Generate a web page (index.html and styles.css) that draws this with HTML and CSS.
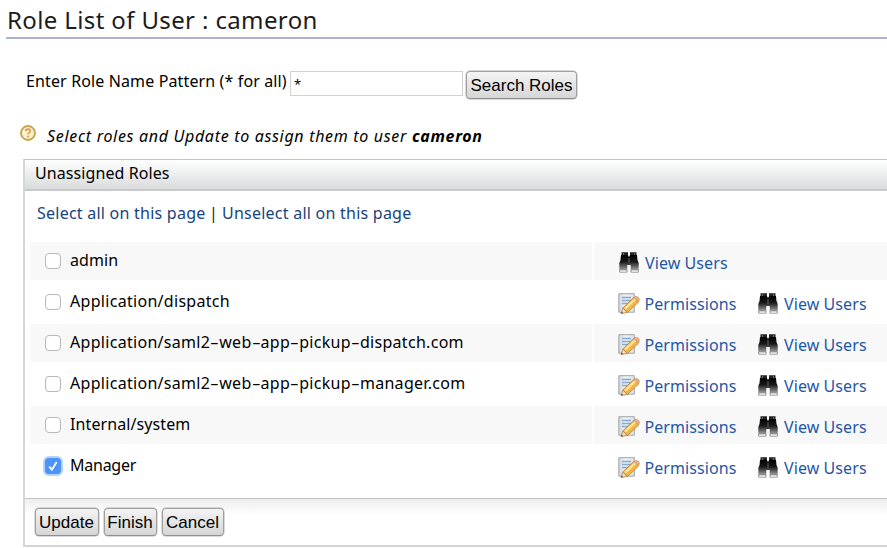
FILE: index.html
```html
<!DOCTYPE html>
<html lang="en">
<head>
<meta charset="utf-8">
<title>Role List of User</title>
<link rel="stylesheet" href="styles.css">
</head>
<body>
<svg class="defs" width="0" height="0" aria-hidden="true">
  <defs>
    <linearGradient id="barrel" x1="0" y1="0" x2="0" y2="1">
      <stop offset="0" stop-color="#000"/><stop offset=".4" stop-color="#1a1a1a"/><stop offset="1" stop-color="#c4c4c4"/>
    </linearGradient>
    <linearGradient id="sheet" x1="0" y1="0" x2="1" y2="0">
      <stop offset="0" stop-color="#cfd5da"/><stop offset=".4" stop-color="#eef3f8"/><stop offset="1" stop-color="#dde4ea"/>
    </linearGradient>
    <symbol id="binoculars" viewBox="0 0 20 21">
      <path fill="#222" d="M2.500 .3H9v3H2.500zM11 .3h6.500v3H11z"/>
      <path fill="url(#barrel)" d="M2 3h7l.5 1.500h1L11 3h7l.5 5 1.200 3v9.300h-8V13H8.300v7.300h-8V11L1.500 8z"/>
      <path fill="#fff" stroke="#8a8a8a" stroke-width=".8" d="M.7 18h7.200v2.200H.7zM12.100 18h7.200v2.200h-7.200z"/>
      <path fill="#999" opacity=".6" d="M4 1h1v2H4zM15 1h1v2h-1zM9.500 6h1v5h-1z"/>
    </symbol>
    <symbol id="edit" viewBox="0 0 22 21">
      <path fill="url(#sheet)" stroke="#a3a5a7" d="M.8.700h15.500v18.500H.8z"/>
      <path fill="none" stroke="#83a9d2" stroke-width="1.300" d="M4 4.500h9M4 7.500h9M4 10.500h7"/>
      <path fill="#f2b544" stroke="#bd8230" stroke-width=".8" d="M4.800 15 16 4.200l4.800 4.600L9.500 19.500z"/>
      <path fill="none" stroke="#ffe59c" stroke-width="2.200" d="M7 15.800 17.700 5.700"/>
      <path fill="#f3dcb8" stroke="#a37544" stroke-width=".7" d="m4.800 15 4.700 4.500-6.300 1z"/>
      <path fill="#665040" d="m3.600 18.500 1.500 1.600-2.200.6z"/>
      <path fill="#eeb08c" stroke="#c09068" stroke-width=".7" d="m15.700 4.600 1-1q2-.6 3.600.7 1.500 1.500.9 3.300l-.8.900z"/>
    </symbol>
  </defs>
</svg>
<main class="page">
  <h1 class="title">Role List of User : cameron</h1>
  <form class="search">
    <label class="t-label" for="pattern">Enter Role Name Pattern (* for all)</label>
    <input class="pattern" id="pattern" type="text" value="*">
    <button class="btn search-btn" type="button">Search Roles</button>
  </form>
  <p class="hint">
    <svg class="help" viewBox="0 0 16 16"><circle cx="8" cy="8" r="7" fill="#fdf3d3" stroke="#c9a44f" stroke-width="1.900"/><path d="M5.700 6.200Q5.800 4.100 8 4.100t2.300 1.900Q10.300 7.200 9 7.900 8 8.400 8 9.500" fill="none" stroke="#dc963f" stroke-width="1.600"/><path fill="#dc963f" d="M7.100 10.700h1.800v1.700H7.100z"/></svg>
    <span class="t-hint">Select roles and Update to assign them to user <b>cameron</b></span>
  </p>
  <section class="panel">
    <h2 class="panel-head">Unassigned Roles</h2>
    <div class="panel-body">
      <div class="select-links"><a class="t-sel">Select all on this page</a><span class="bar">|</span><a class="t-unsel">Unselect all on this page</a></div>
      <div class="row shade">
        <div class="name"><i class="box"></i><span class="tight">admin</span></div>
        <div class="actions"><a class="action view"><svg class="bin"><use href="#binoculars"/></svg>View Users</a></div>
      </div>
      <div class="row">
        <div class="name"><i class="box"></i><span>Application/dispatch</span></div>
        <div class="actions"><a class="action perm"><svg class="pen"><use href="#edit"/></svg>Permissions</a><a class="action view"><svg class="bin"><use href="#binoculars"/></svg>View Users</a></div>
      </div>
      <div class="row shade">
        <div class="name"><i class="box"></i><span>Application/saml2<i class="dash">-</i>web<i class="dash">-</i>app<i class="dash">-</i>pickup<i class="dash">-</i>dispatch.com</span></div>
        <div class="actions"><a class="action perm"><svg class="pen"><use href="#edit"/></svg>Permissions</a><a class="action view"><svg class="bin"><use href="#binoculars"/></svg>View Users</a></div>
      </div>
      <div class="row">
        <div class="name"><i class="box"></i><span>Application/saml2<i class="dash">-</i>web<i class="dash">-</i>app<i class="dash">-</i>pickup<i class="dash">-</i>manager.com</span></div>
        <div class="actions"><a class="action perm"><svg class="pen"><use href="#edit"/></svg>Permissions</a><a class="action view"><svg class="bin"><use href="#binoculars"/></svg>View Users</a></div>
      </div>
      <div class="row shade">
        <div class="name"><i class="box"></i><span class="tight">Internal/system</span></div>
        <div class="actions"><a class="action perm"><svg class="pen"><use href="#edit"/></svg>Permissions</a><a class="action view"><svg class="bin"><use href="#binoculars"/></svg>View Users</a></div>
      </div>
      <div class="row">
        <div class="name"><i class="box checked"><svg viewBox="0 0 16 16"><path d="m4.200 8.500 2.700 3.200L11.700 4" fill="none" stroke="#fff" stroke-width="1.800"/></svg></i><span class="tighter">Manager</span></div>
        <div class="actions"><a class="action perm"><svg class="pen"><use href="#edit"/></svg>Permissions</a><a class="action view"><svg class="bin"><use href="#binoculars"/></svg>View Users</a></div>
      </div>
    </div>
    <footer class="panel-foot">
      <button class="btn update" type="button">Update</button>
      <button class="btn finish" type="button">Finish</button>
      <button class="btn cancel" type="button">Cancel</button>
    </footer>
  </section>
</main>
</body>
</html>
```
FILE: styles.css
```css
* { box-sizing: border-box; }
body {
  margin: 0;
  background: #fff;
  color: #000;
  font: 16px/20px "Noto Sans", "Open Sans", sans-serif;
  letter-spacing: .3px;
  overflow: hidden;
  white-space: nowrap;
}
.defs { display: block; }
.page { height: 548px; padding-left: 6px; }
.title {
  margin: 0;
  height: 39px;
  padding: 4px 0 0 1px;
  border-bottom: 2px solid #a9b3d1;
  color: #1c1c1c;
  font-size: 24px;
  font-weight: 400;
  line-height: 32px;
  letter-spacing: .37px;
}
.search {
  display: flex;
  align-items: flex-start;
  height: 83px;
  padding: 32px 0 0 20px;
}
.search label { width: 264px; letter-spacing: .13px; }
.pattern {
  width: 173px;
  height: 25px;
  padding: 0 3px;
  border: 1px solid #d2d2d2;
  font: 13px "Noto Sans", sans-serif;
}
.btn {
  height: 28px;
  padding: 1px 0 0;
  border: 1.500px solid #a0a0a0;
  border-bottom-color: #8e8e8e;
  border-radius: 4px;
  background: linear-gradient(#f4f4f4, #d6d6d6);
  box-shadow: 0 0 0 .5px #b5b5b5;
  color: #000;
  font: 17px/22px "Liberation Sans", Arial, sans-serif;
  letter-spacing: 0;
}
.search-btn { width: 111px; margin: 0 0 0 3px; }
.hint {
  display: flex;
  height: 37px;
  margin: 0;
  padding: 3px 0 0 14px;
  font-style: italic;
}
.help { width: 16px; height: 16px; margin-right: 11px; }
.t-hint { padding-top: 1px; letter-spacing: .68px; }
.panel {
  height: 388px;
  margin-left: 17px;
  border: 2px solid #d6d6d6;
  border-top: 1px solid #c4c4c4;
  border-right: 0;
}
.panel-head {
  height: 31px;
  margin: 0;
  padding: 3px 0 0 10px;
  border-bottom: 2px solid #c8c9ca;
  background: linear-gradient(#fff, #d9dbdc);
  font-size: 16px;
  font-weight: 400;
  letter-spacing: .08px;
}
.panel-body { height: 307px; padding: 12px 0 0 5px; }
.select-links { display: flex; height: 39px; padding-left: 7px; color: #17437f; letter-spacing: .24px; }
.t-sel { width: 172px; }
.bar { width: 13px; color: #222; }
.row {
  display: grid;
  grid-template-columns: 562px 1fr;
  column-gap: 2px;
  height: 38px;
  margin-bottom: 3px;
}
.shade > div { background: #f8f8f8; }
.name { display: flex; align-items: center; padding-left: 15px; }
.name span { padding-bottom: 2px; }
.name .tight { letter-spacing: .1px; }
.name .tighter { letter-spacing: -.25px; }
.dash {
  display: inline-block;
  width: 9px;
  font-style: normal;
  letter-spacing: 0;
  text-align: center;
  transform: scaleX(1.700);
}
.box {
  width: 16px;
  height: 16px;
  margin-right: 9px;
  border: 1px solid #b8b8b8;
  border-radius: 4px;
  background: #fff;
}
.checked { border: 0; background: #4b93f7; box-shadow: 0 0 0 2px #b3d2fc; }
.checked svg { display: block; width: 16px; height: 16px; }
.actions { display: flex; align-items: center; padding-left: 24px; color: #1d57a7; letter-spacing: .08px; }
.action { display: flex; align-items: center; padding-top: 3px; }
.perm { width: 140px; }
.bin { width: 20px; height: 21px; margin: 0 6px 0 1px; }
.pen { width: 22px; height: 21px; margin-right: 4.500px; }
.perm + .view .bin { margin-left: 0; }
.panel-foot {
  display: flex;
  gap: 5px;
  height: 47px;
  padding: 9px 0 0 9.500px;
  border-top: 1px solid #c2c2c2;
  background: linear-gradient(#eeeeee, #fff 16px);
}
.update { width: 64px; }
.finish { width: 53px; }
.cancel { width: 62px; }
```
